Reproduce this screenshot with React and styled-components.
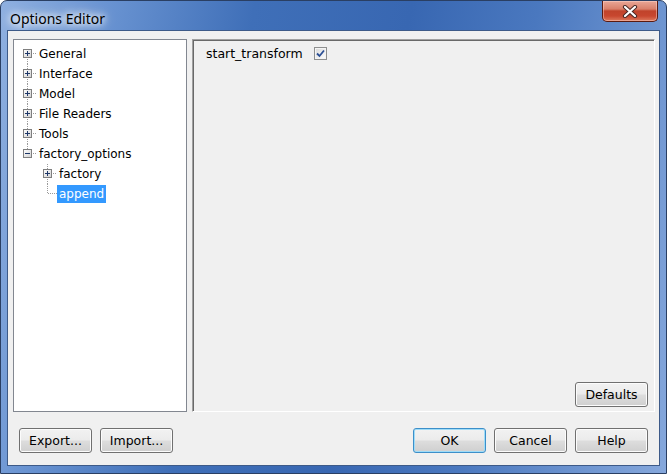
import React from "react";
import styled, { createGlobalStyle } from "styled-components";

const GlobalStyle = createGlobalStyle`
  html, body {
    margin: 0;
    padding: 0;
    background: #ffffff;
  }
`;

const Window = styled.div`
  width: 667px;
  height: 474px;
  box-sizing: border-box;
  border: 1px solid #2a3f63;
  border-radius: 7px 7px 0 0;
  background: linear-gradient(
    100deg,
    #8fb0e0 0%,
    #6a94d2 14%,
    #3f6fb8 34%,
    #3867b2 55%,
    #4a78bf 72%,
    #86a8dc 100%
  );
  display: flex;
  flex-direction: column;
  padding: 0 6px 7px 6px;
  overflow: hidden;
`;

const TitleBar = styled.div`
  height: 29px;
  display: flex;
  align-items: flex-start;
  padding-left: 3px;
`;

const Title = styled.div`
  font-family: "Noto Sans", sans-serif;
  font-size: 14px;
  color: #000;
  line-height: 20px;
  margin-top: 8px;
  text-shadow: 0 0 6px #fff, 0 0 10px #fff, 0 0 14px rgba(255, 255, 255, 0.9);
`;

const CloseButton = styled.div`
  margin-left: auto;
  margin-right: 2px;
  width: 56px;
  height: 21px;
  box-sizing: border-box;
  border: 1px solid #5a1a10;
  border-top: none;
  border-radius: 0 0 5px 5px;
  background: linear-gradient(
    180deg,
    #e9a797 0%,
    #d9806b 40%,
    #c0432b 50%,
    #c8472f 75%,
    #dc7a5e 100%
  );
  box-shadow: inset 0 0 0 1px rgba(255, 220, 210, 0.45);
  display: flex;
  align-items: center;
  justify-content: center;
`;

const Client = styled.div`
  flex: 1;
  border: 1px solid #3d5a88;
  background: #f0f0f0;
  display: flex;
  flex-direction: column;
  padding: 8px 4px 12px 5px;
  font-family: "DejaVu Sans", sans-serif;
  font-size: 12px;
  color: #000;
`;

const Body = styled.div`
  height: 373px;
  display: flex;
  gap: 5px;
`;

const TreePanel = styled.div`
  width: 174px;
  box-sizing: border-box;
  background: #ffffff;
  border: 1px solid #828790;
  padding: 4px 0 0 4px;
`;

const Row = styled.div`
  height: 20px;
  display: flex;
  align-items: center;
  padding-left: ${(p) => p.$level * 20}px;
`;

const Connector = styled.svg`
  width: 19px;
  height: 20px;
  flex: none;
`;

const Label = styled.span`
  height: 18px;
  line-height: 18px;
  padding: 0 2px;
  white-space: nowrap;
  background: ${(p) => (p.$selected ? "#3399ff" : "transparent")};
  color: ${(p) => (p.$selected ? "#ffffff" : "#000000")};
`;

const ContentPanel = styled.div`
  flex: 1;
  box-sizing: border-box;
  border-top: 1px solid #a0a0a0;
  border-left: 1px solid #a0a0a0;
  border-right: 1px solid #ffffff;
  border-bottom: 1px solid #ffffff;
  box-shadow: inset 1px 1px 0 #696969;
  display: flex;
  flex-direction: column;
  justify-content: space-between;
  padding: 3px 6px 4px 13px;
`;

const OptionRow = styled.div`
  height: 20px;
  display: flex;
  align-items: center;
  gap: 11px;
  font-size: 12.5px;
`;

const CheckBox = styled.div`
  width: 13px;
  height: 13px;
  box-sizing: border-box;
  border: 1px solid #8e8f8f;
  background: linear-gradient(135deg, #d8d8d8 0%, #f0f0f0 60%, #ffffff 100%);
  box-shadow: inset 0 0 0 1px #f4f4f4;
  display: flex;
  align-items: center;
  justify-content: center;
`;

const Footer = styled.div`
  margin-top: 16px;
  display: flex;
  justify-content: space-between;
  padding: 0 7px 0 6px;
`;

const ButtonGroup = styled.div`
  display: flex;
  gap: 8px;
`;

const Button = styled.button`
  width: 73px;
  height: 25px;
  box-sizing: border-box;
  border: 1px solid ${(p) => (p.$default ? "#3c8fc9" : "#707070")};
  border-radius: 3px;
  background: linear-gradient(
    180deg,
    #f2f2f2 0%,
    #ebebeb 48%,
    #dddddd 52%,
    #cfcfcf 100%
  );
  box-shadow: inset 0 0 0 1px ${(p) => (p.$default ? "#9fdcf8" : "#fcfcfc")};
  font-family: "DejaVu Sans", sans-serif;
  font-size: 12.5px;
  color: #000;
  padding: 0;
  align-self: ${(p) => (p.$end ? "flex-end" : "auto")};
`;

const treeItems = [
  { label: "General", level: 0, kind: "plus", up: false, down: true },
  { label: "Interface", level: 0, kind: "plus", up: true, down: true },
  { label: "Model", level: 0, kind: "plus", up: true, down: true },
  { label: "File Readers", level: 0, kind: "plus", up: true, down: true },
  { label: "Tools", level: 0, kind: "plus", up: true, down: true },
  { label: "factory_options", level: 0, kind: "minus", up: true, down: false },
  { label: "factory", level: 1, kind: "plus", up: true, down: true },
  { label: "append", level: 1, kind: "leaf", up: true, down: false, selected: true },
];

const dot = { stroke: "#9a9a9a", strokeWidth: 1, strokeDasharray: "1 1" };

const TreeConnector = ({ kind, up, down }) => {
  if (kind === "leaf") {
    return (
      <Connector viewBox="0 0 19 20">
        <line x1="9.5" y1="0" x2="9.5" y2="10" {...dot} />
        <line x1="10" y1="9.5" x2="19" y2="9.5" {...dot} />
      </Connector>
    );
  }
  return (
    <Connector viewBox="0 0 19 20">
      <defs>
        <linearGradient id="boxfill" x1="0" y1="0" x2="1" y2="1">
          <stop offset="0" stopColor="#ffffff" />
          <stop offset="1" stopColor="#d0d0d0" />
        </linearGradient>
      </defs>
      {up && <line x1="9.5" y1="0" x2="9.5" y2="5" {...dot} />}
      {down && <line x1="9.5" y1="15" x2="9.5" y2="20" {...dot} />}
      <line x1="15" y1="9.5" x2="19" y2="9.5" {...dot} />
      <rect x="5.5" y="5.5" width="8" height="8" fill="url(#boxfill)" stroke="#7f7f7f" />
      <line x1="7" y1="9.5" x2="12" y2="9.5" stroke="#1d3768" />
      {kind === "plus" && <line x1="9.5" y1="7" x2="9.5" y2="12" stroke="#1d3768" />}
    </Connector>
  );
};

const CloseGlyph = () => (
  <svg width="16" height="13" viewBox="0 0 16 13">
    <path d="M3 2 L13 11 M13 2 L3 11" stroke="#4a2a26" strokeWidth="4.2" strokeLinecap="round" />
    <path d="M3 2 L13 11 M13 2 L3 11" stroke="#ffffff" strokeWidth="2.2" strokeLinecap="round" />
  </svg>
);

const App = () => {
  return (
    <>
      <GlobalStyle />
      <Window>
        <TitleBar>
          <Title>Options Editor</Title>
          <CloseButton>
            <CloseGlyph />
          </CloseButton>
        </TitleBar>
        <Client>
          <Body>
            <TreePanel>
              {treeItems.map((item) => (
                <Row key={item.label} $level={item.level}>
                  <TreeConnector kind={item.kind} up={item.up} down={item.down} />
                  <Label $selected={item.selected}>{item.label}</Label>
                </Row>
              ))}
            </TreePanel>
            <ContentPanel>
              <OptionRow>
                <span>start_transform</span>
                <CheckBox>
                  <svg width="9" height="9" viewBox="0 0 9 9">
                    <path d="M1 4.5 L3.5 7 L8 1.5" fill="none" stroke="#2b4f95" strokeWidth="1.8" />
                  </svg>
                </CheckBox>
              </OptionRow>
              <Button $end>Defaults</Button>
            </ContentPanel>
          </Body>
          <Footer>
            <ButtonGroup>
              <Button>Export...</Button>
              <Button>Import...</Button>
            </ButtonGroup>
            <ButtonGroup>
              <Button $default>OK</Button>
              <Button>Cancel</Button>
              <Button>Help</Button>
            </ButtonGroup>
          </Footer>
        </Client>
      </Window>
    </>
  );
};

export default App;
